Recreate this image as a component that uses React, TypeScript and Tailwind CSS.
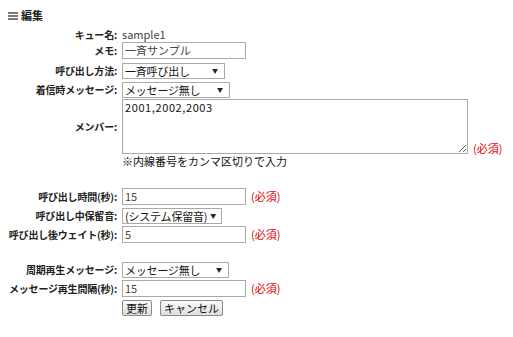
const font = { fontFamily: '"Noto Sans CJK JP", "Liberation Sans", sans-serif' };

function Label({ children }: { children: React.ReactNode }) {
  return (
    <div className="w-[122px] shrink-0 whitespace-nowrap pr-[5px] text-right text-[10px] font-bold leading-none tracking-[-0.2px] text-[#222]">
      {children}
    </div>
  );
}

function Required() {
  return <span className="ml-[5px] whitespace-nowrap text-[11px] leading-none text-[#e00000]">(必須)</span>;
}

function TextBox({ value }: { value: string }) {
  return (
    <div className="flex h-[17px] w-[124px] items-center border border-[#a9a9a9] bg-white px-[2px] text-[11px] leading-none text-[#444]">
      {value}
    </div>
  );
}

function SelectBox({ value, w }: { value: string; w: string }) {
  return (
    <div
      className={`${w} flex h-[16px] items-center justify-between whitespace-nowrap border border-[#a9a9a9] bg-white pl-[2px] pr-[6px] text-[11px] leading-none text-[#111]`}
    >
      <span className="tracking-[-0.2px]">{value}</span>
      <span className="ml-[3px] text-[6px] text-[#222]">▼</span>
    </div>
  );
}

function Button({ children }: { children: React.ReactNode }) {
  return (
    <div className="flex h-[16px] items-center whitespace-nowrap rounded-[2px] border border-[#8a8a8a] bg-gradient-to-b from-[#fafafa] to-[#dedede] px-[3px] text-[11px] leading-none text-[#111]">
      {children}
    </div>
  );
}

export default function App() {
  return (
    <div className="h-[337px] w-[513px] bg-white" style={font}>
      <div className="flex items-center gap-[3px] pl-[8px] pt-[10px]">
        <svg width="10" height="8" viewBox="0 0 10 8">
          <rect x="0" y="0" width="10" height="2" fill="#7a7a7a" />
          <rect x="0" y="3" width="10" height="2" fill="#7a7a7a" />
          <rect x="0" y="6" width="10" height="2" fill="#7a7a7a" />
        </svg>
        <span className="text-[11px] font-bold leading-none text-[#222]">編集</span>
      </div>

      <div className="mt-[6px] flex flex-col">
        <div className="flex h-[15px] items-center">
          <Label>キュー名:</Label>
          <span className="text-[11px] leading-none text-[#444]">sample1</span>
        </div>
        <div className="flex h-[17px] items-center">
          <Label>メモ:</Label>
          <TextBox value="一斉サンプル" />
        </div>
        <div className="mt-[4px] flex h-[16px] items-center">
          <Label>呼び出し方法:</Label>
          <SelectBox value="一斉呼び出し" w="w-[103px]" />
        </div>
        <div className="mt-[3px] flex h-[16px] items-center">
          <Label>着信時メッセージ:</Label>
          <SelectBox value="メッセージ無し" w="w-[108px]" />
        </div>
        <div className="mt-[1px] flex items-center">
          <Label>メンバー:</Label>
          <div className="flex items-end">
            <textarea
              defaultValue="2001,2002,2003"
              className="block h-[55px] w-[346px] resize border border-[#a9a9a9] px-[2px] py-[1px] text-[11px] leading-[13px] tracking-[0.6px] text-[#111] outline-none"
              style={font}
            />
            <Required />
          </div>
        </div>
        <div className="flex h-[14px] items-center">
          <Label>{''}</Label>
          <span className="whitespace-nowrap text-[11px] leading-none text-[#111]">※内線番号をカンマ区切りで入力</span>
        </div>

        <div className="mt-[20px] flex h-[17px] items-center">
          <Label>呼び出し時間(秒):</Label>
          <TextBox value="15" />
          <Required />
        </div>
        <div className="mt-[3px] flex h-[16px] items-center">
          <Label>呼び出し中保留音:</Label>
          <SelectBox value="(システム保留音)" w="w-[100px]" />
        </div>
        <div className="mt-[2px] flex h-[17px] items-center">
          <Label>呼び出し後ウェイト(秒):</Label>
          <TextBox value="5" />
          <Required />
        </div>

        <div className="mt-[19px] flex h-[16px] items-center">
          <Label>周期再生メッセージ:</Label>
          <SelectBox value="メッセージ無し" w="w-[107px]" />
        </div>
        <div className="mt-[2px] flex h-[17px] items-center">
          <Label>メッセージ再生間隔(秒):</Label>
          <TextBox value="15" />
          <Required />
        </div>
        <div className="mt-[3px] flex h-[16px] items-center">
          <Label>{''}</Label>
          <div className="flex gap-[8px]">
            <Button>更新</Button>
            <Button>キャンセル</Button>
          </div>
        </div>
      </div>
    </div>
  );
}
